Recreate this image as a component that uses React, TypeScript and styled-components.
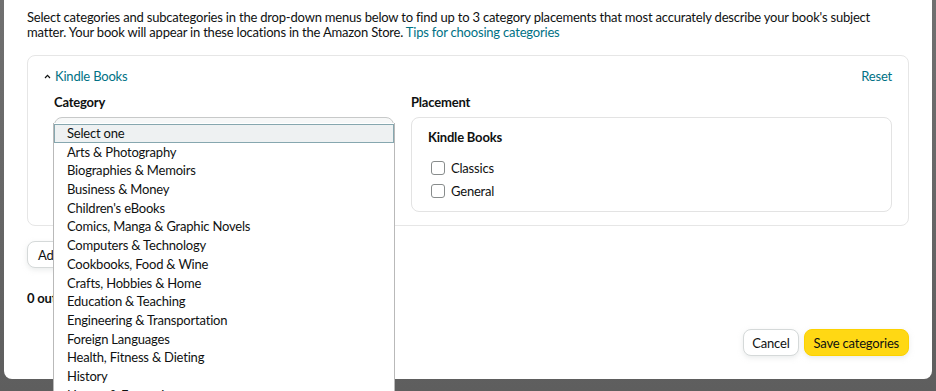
import React from "react";
import styled, { createGlobalStyle } from "styled-components";

const GlobalStyle = createGlobalStyle`
  html, body { margin: 0; padding: 0; }
  body {
    background: #6f6f6f;
    font-family: Lato, "Noto Sans", Arial, sans-serif;
    letter-spacing: -0.2px;
    color: #0f1111;
  }
`;

const Backdrop = styled.div`
  width: 936px;
  height: 391px;
  overflow: hidden;
  padding: 0 4px;
  box-sizing: border-box;
  background: linear-gradient(#707070, #5e5e5e);
`;

const Modal = styled.div`
  background: #fff;
  height: 379px;
  border-radius: 0 0 8px 8px;
  padding: 10px 23px 0;
  box-sizing: border-box;
  display: flex;
  flex-direction: column;
`;

const Intro = styled.p`
  margin: 0;
  font-size: 13px;
  line-height: 15px;
`;

const Link = styled.a`
  color: #007185;
  text-decoration: none;
  cursor: pointer;
`;

const Card = styled.section`
  margin-top: 15px;
  border: 1px solid #e6e6e6;
  border-radius: 8px;
  padding: 12px 16px 13px 16px;
  height: 171px;
  box-sizing: border-box;
`;

const CardHeader = styled.div`
  display: flex;
  justify-content: space-between;
  align-items: center;
  font-size: 13px;
  line-height: 16px;
`;

const Toggle = styled.a`
  display: inline-flex;
  align-items: center;
  gap: 4px;
  color: #007185;
  cursor: pointer;
`;

const Columns = styled.div`
  display: grid;
  grid-template-columns: 340px 481px;
  column-gap: 17px;
  padding-left: 10px;
  margin-top: 10px;
`;

const Column = styled.div`
  display: flex;
  flex-direction: column;
  gap: 7px;
`;

const Label = styled.div`
  font-size: 13px;
  line-height: 16px;
  font-weight: 700;
`;

const SelectWrap = styled.div`
  position: relative;
  height: 29px;
`;

const SelectTrigger = styled.div`
  height: 29px;
  border: 1px solid #c7c9c9;
  border-radius: 8px;
  box-sizing: border-box;
  background: #f7f8f8;
`;

const Popup = styled.ul`
  position: absolute;
  top: 6px;
  left: -1px;
  width: 342px;
  margin: 0;
  padding: 1px 0 0;
  list-style: none;
  background: #fff;
  border: 1px solid #b9b9b9;
  border-top: none;
  box-sizing: border-box;
  z-index: 5;
`;

const Option = styled.li<{ $active?: boolean }>`
  height: 18.7px;
  line-height: 18.7px;
  font-size: 13px;
  padding-left: 13px;
  box-sizing: border-box;
  white-space: nowrap;
  background: ${(p) => (p.$active ? "#eef1f2" : "transparent")};
  outline: ${(p) => (p.$active ? "1px solid #86a7af" : "none")};
  outline-offset: -1px;
`;

const PlacementBox = styled.div`
  border: 1px solid #e3e3e3;
  border-radius: 8px;
  height: 95px;
  box-sizing: border-box;
  padding: 11px 16px 0 16px;
`;

const PlacementTitle = styled.div`
  font-size: 13px;
  line-height: 16px;
  font-weight: 700;
  margin-bottom: 11px;
`;

const CheckRow = styled.label`
  display: flex;
  align-items: center;
  gap: 6px;
  font-size: 13px;
  line-height: 16px;
  height: 23px;
  padding-left: 3px;
`;

const Box = styled.span`
  width: 14px;
  height: 14px;
  border: 1px solid #888c8c;
  border-radius: 3px;
  box-sizing: border-box;
  background: #fff;
  flex: none;
`;

const AddButton = styled.button`
  align-self: flex-start;
  margin-top: 15px;
  height: 27px;
  padding: 0 10px;
  border: 1px solid #d5d9d9;
  border-radius: 8px;
  background: #fff;
  box-shadow: 0 2px 5px rgba(213, 217, 217, 0.5);
  font-family: inherit;
  letter-spacing: inherit;
  font-size: 13px;
  color: #0f1111;
`;

const Count = styled.div`
  margin-top: 22px;
  font-size: 13px;
  line-height: 16px;
  font-weight: 700;
`;

const Footer = styled.div`
  display: flex;
  justify-content: flex-end;
  gap: 5px;
  margin-top: 23px;
`;

const Button = styled.button<{ $primary?: boolean }>`
  height: 27px;
  padding: 0 ${(p) => (p.$primary ? "9px" : "8px")};
  border-radius: 8px;
  border: 1px solid ${(p) => (p.$primary ? "#fcd200" : "#d5d9d9")};
  background: ${(p) => (p.$primary ? "#ffd814" : "#fff")};
  box-shadow: 0 2px 5px rgba(213, 217, 217, 0.5);
  font-family: inherit;
  letter-spacing: inherit;
  font-size: 13px;
  color: #0f1111;
`;

const categories = [
  "Select one",
  "Arts & Photography",
  "Biographies & Memoirs",
  "Business & Money",
  "Children's eBooks",
  "Comics, Manga & Graphic Novels",
  "Computers & Technology",
  "Cookbooks, Food & Wine",
  "Crafts, Hobbies & Home",
  "Education & Teaching",
  "Engineering & Transportation",
  "Foreign Languages",
  "Health, Fitness & Dieting",
  "History",
  "Humor & Entertainment",
];

const Caret = () => (
  <svg width="7" height="5" viewBox="0 0 7 5" aria-hidden>
    <polyline points="1,4 3.5,1.3 6,4" fill="none" stroke="#0f1111" strokeWidth="1.2" />
  </svg>
);

export default function App() {
  return (
    <>
      <GlobalStyle />
      <Backdrop>
        <Modal>
          <Intro>
            Select categories and subcategories in the drop-down menus below to find up to 3 category placements that most accurately describe your book's subject matter. Your book will appear in these locations in the Amazon Store.{" "}
            <Link>Tips for choosing categories</Link>
          </Intro>
          <Card>
            <CardHeader>
              <Toggle>
                <Caret />
                Kindle Books
              </Toggle>
              <Link>Reset</Link>
            </CardHeader>
            <Columns>
              <Column>
                <Label>Category</Label>
                <SelectWrap>
                  <SelectTrigger />
                  <Popup>
                    {categories.map((c, i) => (
                      <Option key={c} $active={i === 0}>
                        {c}
                      </Option>
                    ))}
                  </Popup>
                </SelectWrap>
              </Column>
              <Column>
                <Label>Placement</Label>
                <PlacementBox>
                  <PlacementTitle>Kindle Books</PlacementTitle>
                  <CheckRow>
                    <Box />
                    Classics
                  </CheckRow>
                  <CheckRow>
                    <Box />
                    General
                  </CheckRow>
                </PlacementBox>
              </Column>
            </Columns>
          </Card>
          <AddButton>Add category</AddButton>
          <Count>0 out of 3 categories selected</Count>
          <Footer>
            <Button>Cancel</Button>
            <Button $primary>Save categories</Button>
          </Footer>
        </Modal>
      </Backdrop>
    </>
  );
}
